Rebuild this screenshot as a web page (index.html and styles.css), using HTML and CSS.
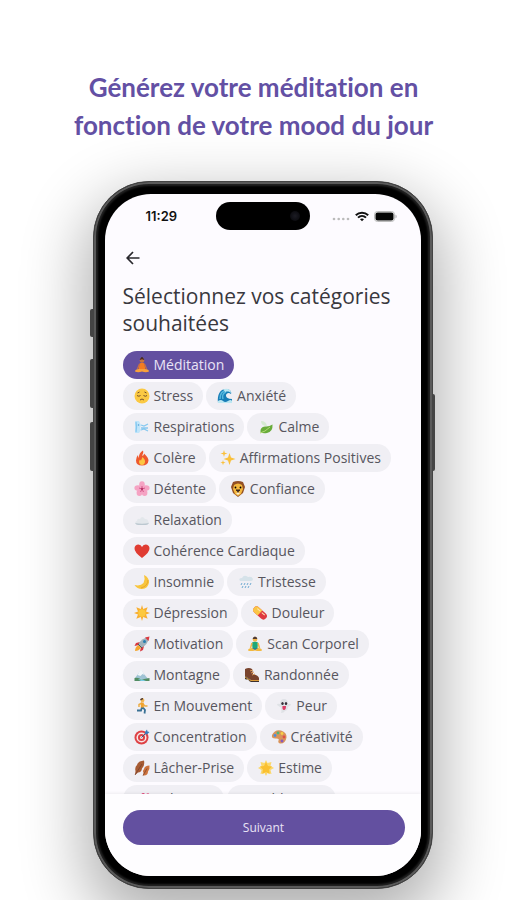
FILE: index.html
```html
<!DOCTYPE html>
<html lang="fr">
<head>
<meta charset="utf-8">
<meta name="viewport" content="width=device-width, initial-scale=1">
<title>Générez votre méditation</title>
<link rel="stylesheet" href="styles.css">
</head>
<body>
<main class="page">
  <h1 class="headline">Générez votre méditation en<br>fonction de votre mood du jour</h1>
  <div class="stage">
  <div class="phone">
    <span class="key key-action"></span>
    <span class="key key-up"></span>
    <span class="key key-down"></span>
    <span class="key key-power"></span>
    <div class="screen">
      <div class="status">
        <span class="time">11:29</span>
        <span class="island"><span class="lens"></span></span>
        <span class="signals">
          <svg class="dots" width="18" height="4" viewBox="0 0 18 4" fill="#bbb"><circle cx="2" cy="2" r="1.3"/><circle cx="6.7" cy="2" r="1.3"/><circle cx="11.3" cy="2" r="1.3"/><circle cx="16" cy="2" r="1.3"/></svg>
          <svg width="14" height="11" viewBox="0 0 14 11" fill="none" stroke="#111" stroke-width="2"><path d="M.8 4.2C4.3.8 9.7.8 13.2 4.2M3 6.6c2.3-2.2 5.7-2.2 8 0"/><path d="M7 10.3 5 8.3c1.1-1 2.900-1 4 0z" fill="#111" stroke="none"/></svg>
          <svg width="23" height="11" viewBox="0 0 23 11"><rect x=".5" y=".5" width="20" height="10" rx="3" fill="#fff" stroke="#bbb"/><rect x="1.500" y="1.500" width="18" height="8" rx="2" fill="#050505"/><path d="M21.500 3.500c1.500.5 1.500 3.500 0 4z" fill="#aaa"/></svg>
        </span>
      </div>
      <button class="back" type="button" aria-label="Retour"><svg width="14" height="14" viewBox="0 0 14 14" fill="none" stroke="#29282d" stroke-width="1.700"><path d="M13.500 7H1.500M7 1 1.200 7 7 13"/></svg></button>
      <h2 class="title">Sélectionnez vos catégories souhaitées</h2>
      <div class="list">
        <div class="row">
          <button class="chip selected" type="button"><svg viewBox="0 0 16 16"><circle cx="8" cy="3.500" r="2.300" fill="#c9743f"/><path d="M5.800 3C6 0 10 0 10.200 3L8 2.200z" fill="#4a2c22"/><circle cx="8" cy="1" r="1" fill="#4a2c22"/><path d="M5.500 6.500q2.500-1.500 5 0l.7 5.500H4.800z" fill="#f57c22"/><path d="M5.500 7 3.500 12M10.500 7l2 5" stroke="#c97043" stroke-width="1.300"/><path d="M1 14.500q0-2.500 4-2.500h6q4 0 4 2.500-3 1.500-7 0-4 1.500-7 0z" fill="#f9a13a"/></svg>Méditation</button>
        </div>
        <div class="row">
          <button class="chip" type="button"><svg viewBox="0 0 16 16"><circle cx="8" cy="8" r="7.500" fill="#fbc943"/><path d="M3 7.500q2 1.500 3.500 0M9.500 7.500q2 1.500 3.500 0M6 12q2-2 4 0M3.500 5l2-1M10.500 4l2 1" fill="none" stroke="#75502b"/></svg>Stress</button>
          <button class="chip" type="button"><svg viewBox="0 0 16 16"><path d="M1 15C0 7 3 1 9 1c4 0 6 3 5 5-2-2-5-1-5 1.500 0 2 2 3.500 6 3.500v4z" fill="#187db6"/><path d="M3 11C3 6 5 3 9 2.500M6 11c-1-3 0-6 3-7" stroke="#57b9df" stroke-width="1.500" fill="none"/><path d="M6 1.500c4-2 8 0 8.500 4-2-2-4-2.500-6-1.500M1 13q3-2 5 0t5 0 4 0v2H1z" fill="#bce7f2"/></svg>Anxiété</button>
        </div>
        <div class="row">
          <button class="chip" type="button"><svg viewBox="0 0 16 16"><path d="M1 2h4l2 4-1 3 1 2-2 3H1z" fill="#c0e5fa"/><path d="M2 3q1 5 0 10M7 6l3 1 4-2M7 9h7M7 11l3-1 4 2" fill="none" stroke="#86c8ef" stroke-width="1.300"/><circle cx="4.500" cy="6" r=".8" fill="#4e9ed4"/></svg>Respirations</button>
          <button class="chip" type="button"><svg viewBox="0 0 16 16"><path d="M3 2q5 0 6 5Q3 7 3 2z" fill="#d5ead1"/><path d="M2.500 13Q2 8 7 7.500q4 .5 7.500-2Q15 13 9 14q-4 1-6.500-1z" fill="#68ac3a"/><path d="M2 14q5-1 10-6" stroke="#b3d973" fill="none"/></svg>Calme</button>
        </div>
        <div class="row">
          <button class="chip" type="button"><svg viewBox="0 0 16 16"><path d="M9 .5c1 3-1 3.500-.5 5.500Q10 5 10 3.500q4.500 4 4.500 7Q14 15.500 8 15.500t-6-5Q2 7 4 5q0 2 1 3Q4.500 3 9 .5z" fill="#ee582d"/><path d="M8.500 7q3 3 2.500 5-.5 3-3 3t-3-3q0-1.500 1-2.500.5 1 1 1z" fill="#fcc642"/></svg>Colère</button>
          <button class="chip" type="button"><svg viewBox="0 0 16 16" fill="#fac03b"><path d="m9.500 3 1.500 4.500L15.500 9 11 10.500 9.500 15 8 10.500 3.500 9 8 7.500zM4 0l.8 2.700L7.500 3.500l-2.700.8L4 7l-.8-2.700L.5 3.500l2.700-.8zM3 10l.6 2 2 .6-2 .6-.6 2-.6-2-2-.6 2-.6z"/></svg>Affirmations Positives</button>
        </div>
        <div class="row">
          <button class="chip" type="button"><svg viewBox="0 0 16 16"><g fill="#f5a3c3"><ellipse cx="8" cy="3.700" rx="2.800" ry="3.400"/><ellipse cx="3.800" cy="7" rx="3.400" ry="2.700"/><ellipse cx="12.200" cy="7" rx="3.400" ry="2.700"/><ellipse cx="5.400" cy="11.800" rx="2.800" ry="3.200"/><ellipse cx="10.600" cy="11.800" rx="2.800" ry="3.200"/></g><path d="M8 8V5M8 8 5 7M8 8l3-1M8 8l-1.500 3M8 8l1.500 3" stroke="#d65a8b"/><circle cx="8" cy="8" r="1.200" fill="#b93669"/></svg>Détente</button>
          <button class="chip" type="button"><svg viewBox="0 0 16 16"><path d="M3 1q5-2 10 0l2 5-2 6-5 4-5-4-2-6z" fill="#935025"/><path d="M4 4q4-3 8 0l1 4-2 5-3 2-3-2-2-5z" fill="#f5b83d"/><path d="m6 9 2 1.500L10 9zM8 10v2" fill="#3e291f" stroke="#3e291f"/><circle cx="5.500" cy="6.500" r=".9"/><circle cx="10.500" cy="6.500" r=".9"/><path d="M6 12q2-1 4 0l-2 2z" fill="#fff0cf"/></svg>Confiance</button>
        </div>
        <div class="row">
          <button class="chip" type="button"><svg viewBox="0 0 16 16"><path d="M2 12q-2-2 1-3 0-3 3-2 2-4 5 0 3 0 3 2 2 2 0 3z" fill="#e3e7eb"/><path d="M1 11q7 1.500 14 0-1 2-3 2H4q-2 0-3-2z" fill="#bcc8d0"/></svg>Relaxation</button>
        </div>
        <div class="row">
          <button class="chip" type="button"><svg viewBox="0 0 16 16"><path d="M8 15Q0 9 .5 5 1 1.500 4.500 1.500 7 1.500 8 4q1-2.500 3.500-2.500 3.500 0 4 3.500Q16 9 8 15z" fill="#e03c32"/></svg>Cohérence Cardiaque</button>
        </div>
        <div class="row">
          <button class="chip" type="button"><svg viewBox="0 0 16 16"><path d="M10 1q5 2 5 7.500-1 6-7 6.500-5 0-7.500-4 6 1.500 9-2 2-4 .5-8z" fill="#f8c53d"/><path d="M14 6q0 6-7 8" fill="none" stroke="#e7a72f"/></svg>Insomnie</button>
          <button class="chip" type="button"><svg viewBox="0 0 16 16"><path d="M2 7Q0 4 4 4q2-4 6-1 4-1 5 2 0 2-2 2z" fill="#d5e2e9"/><path d="m4 9-1 2m4-2-1 2m4-2-1 2m4-2-1 2m-7 1-1 2m4-2-1 2m4-2-1 2" stroke="#70abd2"/></svg>Tristesse</button>
        </div>
        <div class="row">
          <button class="chip" type="button"><svg viewBox="0 0 16 16"><path d="m8 0 1.200 4 4.500-1.700L12 6.500 16 8l-4 1.500 1.700 4.200-4.500-1.700L8 16l-1.200-4-4.500 1.700L4 9.500 0 8l4-1.500-1.700-4.200L6.800 4z" fill="#f8ae2f"/><circle cx="8" cy="8" r="3.700" fill="#fcc93f"/></svg>Dépression</button>
          <button class="chip" type="button"><svg viewBox="0 0 16 16"><g transform="rotate(42 8 8)"><rect x="0" y="4.500" width="16" height="7" rx="3.500" fill="#df3940"/><path d="M8 4.500H3.500a3.500 3.500 0 0 0 0 7H8z" fill="#fac646"/><path d="M3 6.500h4M9 6.500h4" stroke="#ffe4b0"/></g></svg>Douleur</button>
        </div>
        <div class="row">
          <button class="chip" type="button"><svg viewBox="0 0 16 16"><path d="m6 6-4 1-1.500 3L5 9zM10 10l-1 4-3 1.500L7 11z" fill="#d8363d"/><path d="M4 9Q7 2 15 1q-1 8-8 11z" fill="#9fb1bb"/><path d="M11 1.500 15.500.5l-1 4.500z" fill="#db3b40"/><circle cx="10.500" cy="5.500" r="1.500" fill="#277daf"/><path d="M4.500 9 7 11.500Q5 15 1 15 1 11 4.500 9z" fill="#f4a62e"/><path d="m4 8 4 4" stroke="#445966"/></svg>Motivation</button>
          <button class="chip" type="button"><svg viewBox="0 0 16 16"><circle cx="8" cy="3.500" r="2.300" fill="#f5b64c"/><path d="M5.600 3Q6 .5 8 .5T10.400 3z" fill="#533b30"/><path d="M5 6.500q3-1.500 6 0l-.5 6h-5z" fill="#20a878"/><path d="M5 7 3.500 12M11 7l1.500 5" stroke="#f5b64c" stroke-width="1.500"/><path d="M1 14.500q0-2.500 4-2.500h6q4 0 4 2.500-3 1-7 0-4 1-7 0z" fill="#f3b83d"/><path d="M5 12h6l-3 2z" fill="#267f9b"/></svg>Scan Corporel</button>
        </div>
        <div class="row">
          <button class="chip" type="button"><svg viewBox="0 0 16 16"><path d="m1 11 6-8 3 4 5 6z" fill="#9fc3d4"/><path d="m3.500 8 3.500-6 3.500 6-2-1-2 2z" fill="#f2f7fa"/><path d="M.5 11q4-1 7 1.500L15.500 11v3H.5z" fill="#518c62"/><path d="M4 12.500q4-1 8 1.500H7z" fill="#78cce4"/></svg>Montagne</button>
          <button class="chip" type="button"><svg viewBox="0 0 16 16"><path d="M1 2q4-2 7 0l1 5q5 1 6 4v2H7L1 9z" fill="#79442e"/><path d="M1 9v3q2 1 3 0 1 3 3 3h8v-2H7z" fill="#3c302c"/><path d="m6 4 3-1M7 6l3-1M8 8l3-1" stroke="#d99a5c"/><path d="M1 10q4 3 6 3.500h8" fill="none" stroke="#d89a3a"/></svg>Randonnée</button>
        </div>
        <div class="row">
          <button class="chip" type="button"><svg viewBox="0 0 16 16" fill="none" stroke-width="1.500"><path d="m8.500 9 2.500 3-.5 3.500M8 9l-1 3.500H3" stroke="#397194" stroke-width="1.800"/><path d="M8 5 5 6.500V9M9 6l2 2h2.500" stroke="#ecad45"/><path d="M8.300 4.500v5" stroke="#f2a32d" stroke-width="3"/><circle cx="8.500" cy="2.200" r="1.200" fill="#f2b551" stroke="#f2b551"/><path d="M6.700 2.200Q7 .7 9 .8" stroke="#533b30"/></svg>En Mouvement</button>
          <button class="chip" type="button"><svg viewBox="0 0 16 16"><path d="M4 6q0-5 4-5t4 5q3-1 3 1l-3 2q0 3-3 4-1 2-4 2 1-2 0-4 0-2-1-2L1 7q0-2 3-1z" fill="#dfe2e6"/><ellipse cx="6.500" cy="5.500" rx="1.200" ry="1.500" fill="#343039"/><ellipse cx="10" cy="5.500" rx="1.200" ry="1.500" fill="#343039"/><path d="M6.500 8h3.500q0 4-2 4t-1.500-4z" fill="#db3e66"/></svg>Peur</button>
        </div>
        <div class="row">
          <button class="chip" type="button"><svg viewBox="0 0 16 16"><circle cx="7.500" cy="8.500" r="7" fill="#de4145"/><circle cx="7.500" cy="8.500" r="4.300" fill="none" stroke="#f7e9e9" stroke-width="1.500"/><circle cx="7.500" cy="8.500" r="1.500" fill="#f7e9e9"/><path d="m7.500 8.500 5-5" stroke="#355a87"/><path d="m11 3 2-2.500.5 2 2 .5-2.500 2.500-2-.5z" fill="#397bbb"/></svg>Concentration</button>
          <button class="chip" type="button"><svg viewBox="0 0 16 16"><path d="M1 6Q4 0 10 1.500q6 2 5.500 7-1 6-6 6-3-.5-2-3 1-2-2-2Q0 10 1 6z" fill="#d9935a"/><circle cx="4" cy="6.500" r="1.400" fill="#4c8ddd"/><circle cx="7" cy="4" r="1.400" fill="#50b576"/><circle cx="11" cy="4.500" r="1.400" fill="#f7cf45"/><circle cx="13" cy="8" r="1.400" fill="#df4d48"/><circle cx="11" cy="12" r="1.400" fill="#8859bc"/></svg>Créativité</button>
        </div>
        <div class="row">
          <button class="chip" type="button"><svg viewBox="0 0 16 16"><path d="M10 .5Q4 1 3 5q-2.500 2-1.500 6L1 15l3-2.500q3.500 0 4-4 3-3 2-8z" fill="#a65b33"/><path d="M15.500 5.500q-5 0-5.500 3.500-2 2-.5 4L9 15.500q5 .5 5-4 2-2 1.500-6z" fill="#cc723c"/><path d="M1 15 8 4M9 15.500l4-7" stroke="#713e2c" stroke-width=".7" fill="none"/></svg>Lâcher-Prise</button>
          <button class="chip" type="button"><svg viewBox="0 0 16 16"><path d="m8 0 1.500 3 4-1-1 4L16 8l-3.500 2 1 4-4-1L8 16l-1.500-3-4 1 1-4L0 8l3.500-2-1-4 4 1z" fill="#fbd86b"/><path d="m8 2 2 4 4 .6-3 3 .7 4.300L8 12l-3.700 2 .7-4.400-3-3L6 6z" fill="#fac030"/></svg>Estime</button>
        </div>
        <div class="row">
          <button class="chip" type="button"><svg viewBox="0 0 16 16"><path d="M6 14Q0 10 1 7q2-3 5 0 3-3 5 0 1 3-5 7z" fill="#f397bc"/><path d="M11 10Q6 6 7 3.500q2-3 4.500 0 3-2.500 4 0 1 3-4.500 6.500z" fill="#e34478"/></svg>Relations</button>
          <button class="chip" type="button"><svg viewBox="0 0 16 16"><rect x="1" y="3" width="14" height="10" rx="2" fill="#d9d9df"/><path d="M3 5h4M9 5h4M3 8h10" stroke="#b7b7c0"/></svg>Addictions</button>
        </div>
      </div>
      <div class="footer"><button class="next" type="button">Suivant</button></div>
    </div>
  </div>
  </div>
</main>
</body>
</html>
```
FILE: styles.css
```css
* { box-sizing: border-box; }

body {
  margin: 0;
  background: #fff;
  font-family: "Open Sans", sans-serif;
}

button { font: inherit; border: 0; }

.page {
  min-height: 100vh;
  overflow: hidden;
}

.headline {
  margin: 0;
  padding-top: 68px;
  color: #6350a4;
  font-family: Lato, sans-serif;
  font-size: 26px;
  font-variant-ligatures: none;
  font-weight: 700;
  line-height: 38px;
  text-align: center;
}

.stage {
  display: flex;
  justify-content: center;
  padding: 37px 0 10px 18px;
}

.phone {
  position: relative;
  width: 70%;
  max-width: 340px;
  aspect-ratio: 340 / 708;
  padding: 12px 11px;
  border: 1px solid #444;
  border-radius: 56px;
  background: #000;
  box-shadow: inset 0 0 0 2px #5a5a5a, inset 0 0 2px 4px #222, 0 24px 64px 8px rgba(0, 0, 0, 0.32);
}

.key {
  position: absolute;
  left: -4px;
  width: 3px;
  border-radius: 2px 0 0 2px;
  background: #444;
}
.key-action { top: 18%; height: 4%; }
.key-up { top: 25%; height: 7%; }
.key-down { top: 34%; height: 7%; }
.key-power { top: 30%; right: -3px; left: auto; height: 11%; border-radius: 0 2px 2px 0; }

.screen {
  display: flex;
  flex-direction: column;
  height: 100%;
  overflow: hidden;
  border-radius: 46px;
  background: #fdfbff;
}

.status {
  display: grid;
  grid-template-columns: 1fr 94px 1fr;
  align-items: center;
  height: 44px;
}
.time {
  padding-left: 41px;
  color: #111;
  font-family: Inter, sans-serif;
  font-size: 13px;
  font-weight: 600;
}
.island {
  display: flex;
  align-items: center;
  justify-content: flex-end;
  height: 28px;
  padding-right: 10px;
  border-radius: 14px;
  background: #000;
}
.lens {
  width: 10px;
  height: 10px;
  border-radius: 50%;
  background: radial-gradient(circle, #1c1c24, #050508);
}
.signals {
  display: flex;
  align-items: center;
  justify-content: flex-end;
  gap: 5px;
  padding-right: 24px;
}
.dots { margin-top: 6px; }

.back {
  display: flex;
  align-self: flex-start;
  margin: 13px 0 0 21px;
  padding: 0;
  background: none;
}

.title {
  margin: 18px 16px 14px 18px;
  color: #39383e;
  font-size: 21px;
  font-weight: 400;
  line-height: 27px;
}

.list {
  display: flex;
  flex: 1;
  flex-direction: column;
  gap: 3px;
  min-height: 0;
  overflow: hidden;
  padding: 0 16px 0 18px;
}
.row { display: flex; flex: none; gap: 3px; }

.chip {
  display: flex;
  align-items: center;
  gap: 4px;
  height: 28px;
  padding: 0 10px 0 11px;
  border-radius: 14px;
  background: #f0eff4;
  color: #57565e;
  font-size: 14px;
  line-height: 20px;
  white-space: nowrap;
}
.chip svg { flex: none; width: 16px; height: 16px; }
.chip.selected { background: #6350a0; color: #e9e3f6; }

.footer {
  position: relative;
  padding: 16px 16px 31px 18px;
  background: #fefdff;
  box-shadow: 0 -1px 3px rgba(0, 0, 0, 0.06);
}
.next {
  width: 100%;
  height: 35px;
  border-radius: 18px;
  background: #6350a0;
  color: #e9e3f6;
  font-size: 12px;
}
```
